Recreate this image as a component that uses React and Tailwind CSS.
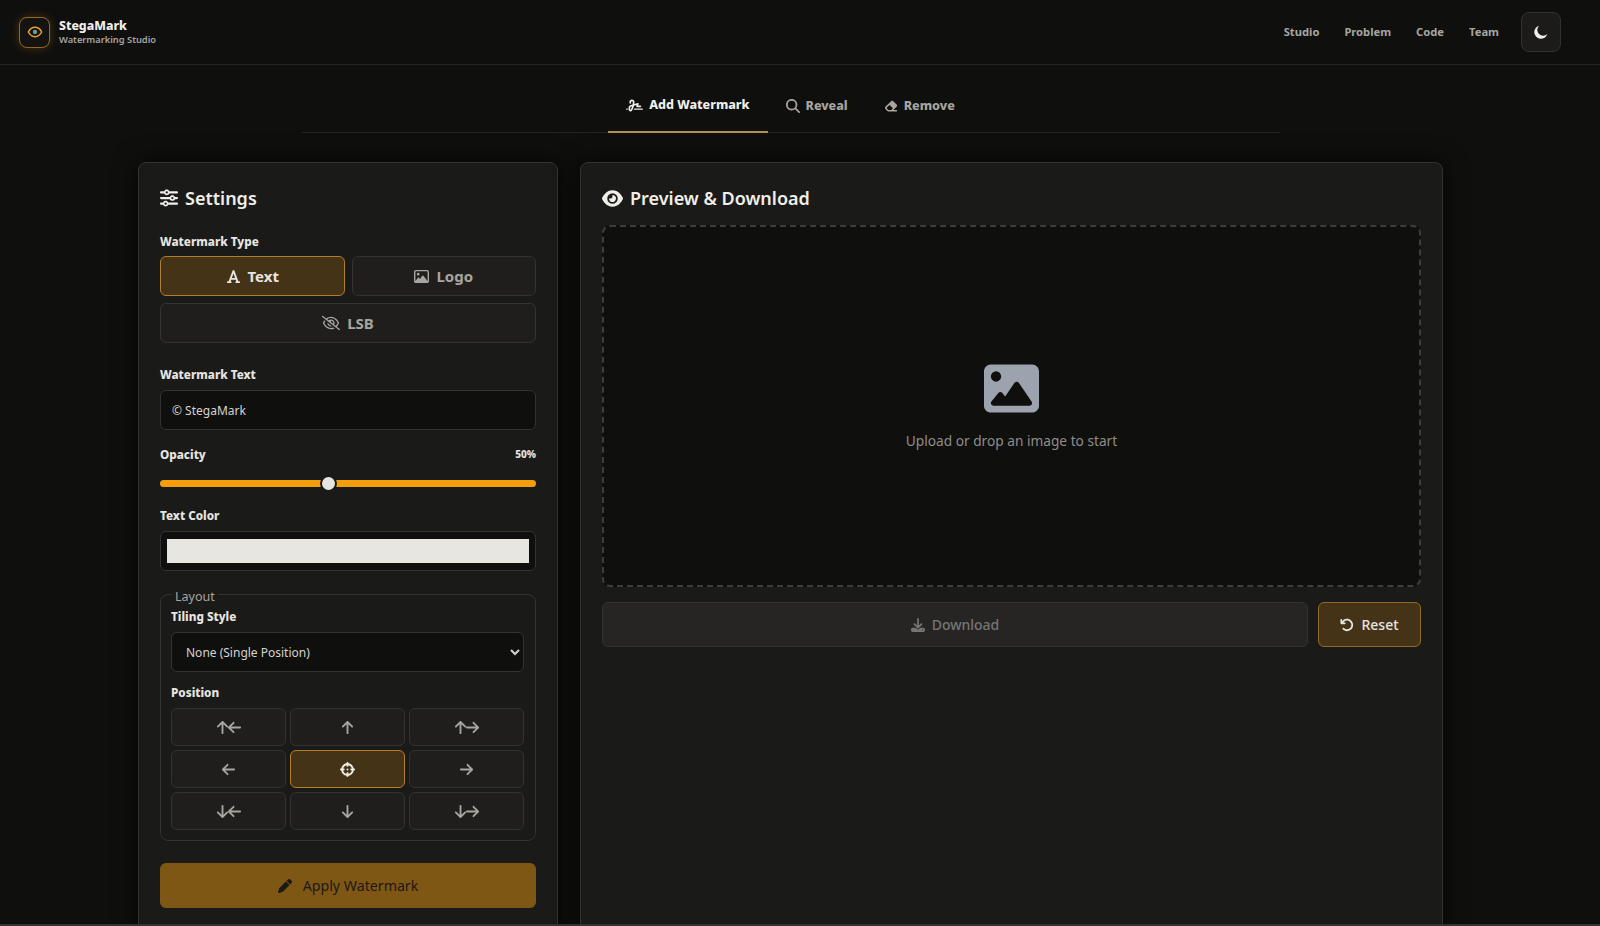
import React from "react";
import {
  FaArrowDown,
  FaArrowLeft,
  FaArrowRight,
  FaArrowRotateLeft,
  FaArrowUp,
  FaCrosshairs,
  FaDownload,
  FaEraser,
  FaEye,
  FaFont,
  FaImage,
  FaMagnifyingGlass,
  FaPen,
  FaRegEyeSlash,
  FaRegImage,
  FaSignature,
  FaSliders,
} from "react-icons/fa6";

const positions = [
  [FaArrowUp, FaArrowLeft],
  [FaArrowUp],
  [FaArrowUp, FaArrowRight],
  [FaArrowLeft],
  [FaCrosshairs],
  [FaArrowRight],
  [FaArrowDown, FaArrowLeft],
  [FaArrowDown],
  [FaArrowDown, FaArrowRight],
];

function Label({ children, className = "" }) {
  return <div className={`text-[11.7px] leading-[16px] font-extrabold text-[#e7e5e0] ${className}`}>{children}</div>;
}

function TypeButton({ icon: Icon, active, iconSize = "text-[15px]", children }) {
  return (
    <button
      className={`h-10 flex items-center justify-center gap-[7px] rounded-md border text-[15px] font-bold ${
        active
          ? "bg-[#453318] border-[#b07f28] text-[#e7e5e0]"
          : "bg-[#1f1e1d] border-[#333331] text-[#a8a5a0]"
      }`}
    >
      <Icon className={iconSize} />
      {children}
    </button>
  );
}

function PositionButton({ icons, active }) {
  return (
    <button
      className={`h-[38px] flex items-center justify-center rounded-md border ${
        active
          ? "bg-[#453318] border-[#b07f28] text-[#f0eee9]"
          : "bg-[#1f1e1d] border-[#333331] text-[#a8a5a0]"
      }`}
    >
      {icons.map((Icon, i) => (
        <Icon key={i} className={`text-[15px] ${i === 1 ? "-ml-[3px]" : ""}`} />
      ))}
    </button>
  );
}

function Logo() {
  return (
    <div className="w-[31px] h-[31px] flex items-center justify-center rounded-lg border border-[#8f6a25] bg-[#141312] shadow-[0_0_10px_rgba(245,158,11,0.25)]">
      <svg width="16" height="16" viewBox="0 0 24 24" fill="none" stroke="#eda529" strokeWidth="2.2">
        <path d="M2 12s3.6-7 10-7 10 7 10 7-3.6 7-10 7-10-7-10-7z" />
        <circle cx="12" cy="12" r="3.2" fill="#5ba7a0" stroke="none" />
      </svg>
    </div>
  );
}

export default function App() {
  return (
    <div className="h-[926px] overflow-hidden bg-[#0f0f0e] border-b-2 border-[#333333] font-['Noto_Sans',sans-serif]">
      <header className="h-[65px] flex items-center justify-between pl-[19px] pr-[39px] border-b border-[#242423]">
        <div className="flex items-center gap-[9px]">
          <Logo />
          <div>
            <div className="text-[12.3px] leading-[14px] font-extrabold text-[#f0eee9]">StegaMark</div>
            <div className="text-[9.3px] leading-[13px] font-semibold text-[#a8a5a0]">Watermarking Studio</div>
          </div>
        </div>
        <nav className="flex items-center gap-[25px] text-[11.2px] font-bold text-[#a8a5a0]">
          <span>Studio</span>
          <span>Problem</span>
          <span>Code</span>
          <span>Team</span>
          <button className="ml-[-3px] w-10 h-10 flex items-center justify-center rounded-lg border border-[#333331] bg-[#1c1b1a] text-[#f0eee9]">
            <svg width="16" height="16" viewBox="0 0 24 24" fill="currentColor">
              <path d="M9 2.5A10 10 0 1 0 21.5 15 8.6 8.6 0 0 1 9 2.5z" />
            </svg>
          </button>
        </nav>
      </header>

      <div className="w-[1581px]">
        <div className="w-[978px] mx-auto mt-[16px] flex justify-center border-b border-[#242423] h-[52px]">
          <div className="h-[52px] flex items-center gap-[6px] px-[18px] pb-[2px] border-b-2 border-[#b58f52] text-[12.5px] font-extrabold text-[#f0eee9]">
            <FaSignature className="text-[17px]" />
            Add Watermark
          </div>
          <div className="h-[52px] flex items-center gap-[6px] px-[18px] pb-[2px] text-[12.5px] font-extrabold text-[#a8a5a0]">
            <FaMagnifyingGlass className="text-[14px]" />
            Reveal
          </div>
          <div className="h-[52px] flex items-center gap-[6px] px-[18px] pb-[2px] text-[12.6px] font-extrabold text-[#a8a5a0]">
            <FaEraser className="text-[14px]" />
            Remove
          </div>
        </div>

        <main className="w-[1305px] mx-auto mt-[29px] flex gap-[22px] items-start">
          <section className="w-[420px] shrink-0 h-[800px] rounded-lg border border-[#333331] bg-[#1a1a19] shadow-[0_0_24px_rgba(0,0,0,0.7)] px-[21px] pt-[21px]">
            <h2 className="flex items-center gap-[7px] h-7 text-[18px] font-semibold text-[#f0eee9]">
              <FaSliders className="text-[18px]" />
              Settings
            </h2>

            <Label className="mt-[21px]">Watermark Type</Label>
            <div className="mt-[7px] grid grid-cols-2 gap-[7px]">
              <TypeButton icon={FaFont} active>Text</TypeButton>
              <TypeButton icon={FaRegImage}>Logo</TypeButton>
              <div className="col-span-2 grid">
                <TypeButton icon={FaRegEyeSlash} iconSize="text-[18px]">LSB</TypeButton>
              </div>
            </div>

            <Label className="mt-[23px]">Watermark Text</Label>
            <input
              readOnly
              value="© StegaMark"
              className="mt-[8px] block w-full h-10 px-[11px] rounded-md border border-[#333331] bg-[#0f0f0e] text-[12px] text-[#d6d3ce] outline-none"
            />

            <div className="mt-[16px] flex items-center justify-between">
              <Label>Opacity</Label>
              <span className="text-[10px] font-extrabold text-[#e7e5e0]">50%</span>
            </div>
            <div className="mt-[13px] relative h-[16px] flex items-center">
              <div className="w-full h-[7px] rounded-full bg-[#f59e0b]" />
              <div className="absolute left-[160px] top-0 w-[17px] h-[17px] rounded-full bg-[#e7e5e0] border-2 border-[#1a1a19]" />
            </div>

            <Label className="mt-[16px]">Text Color</Label>
            <div className="mt-[8px] h-10 rounded-md border border-[#333331] bg-[#0f0f0e] flex items-center px-[6px]">
              <div className="w-full h-[24px] bg-[#e8e6e1]" />
            </div>

            <fieldset className="mt-[12px] h-[258px] rounded-lg border border-[#333331] pl-[10px] pr-[11px] pb-2">
              <legend className="ml-[1px] px-[3px] pt-[6px] text-[12.5px] leading-[16px] text-[#a8a5a0]">Layout</legend>
              <Label className="mt-[3px]">Tiling Style</Label>
              <select className="mt-[8px] block w-full h-10 pl-[10px] pr-1 rounded-md border border-[#333331] bg-[#0f0f0e] text-[12px] text-[#d6d3ce] outline-none">
                <option>None (Single Position)</option>
              </select>
              <Label className="mt-[12px]">Position</Label>
              <div className="mt-[8px] grid grid-cols-3 gap-1">
                {positions.map((icons, i) => (
                  <PositionButton key={i} icons={icons} active={i === 4} />
                ))}
              </div>
            </fieldset>

            <button className="mt-[22px] w-full h-[45px] flex items-center justify-center gap-[11px] rounded-md bg-[#7f5714] text-[14.2px] text-[#1c1917]">
              <FaPen className="text-[14px]" />
              Apply Watermark
            </button>
          </section>

          <section className="flex-1 h-[800px] rounded-lg border border-[#333331] bg-[#1a1a19] shadow-[0_0_24px_rgba(0,0,0,0.7)] px-[21px] pt-[21px]">
            <h2 className="flex items-center gap-[7px] h-7 text-[18px] font-semibold text-[#f0eee9]">
              <FaEye className="text-[21px]" />
              Preview &amp; Download
            </h2>
            <div className="mt-[13px] h-[362px] rounded-lg border-2 border-dashed border-[#3d3d3b] bg-[#0f0f0e] flex flex-col items-center justify-center">
              <FaImage className="text-[#9ca3af] text-[55px]" />
              <p className="mt-[14px] text-[13.7px] leading-[21px] text-[#8f8d89]">Upload or drop an image to start</p>
            </div>
            <div className="mt-[15px] flex gap-[10px]">
              <button className="flex-1 h-[45px] flex items-center justify-center gap-[7px] rounded-md border border-[#333331] bg-[#262524] text-[14px] font-medium text-[#777673]">
                <FaDownload className="text-[14px]" />
                Download
              </button>
              <button className="w-[103px] h-[45px] flex items-center justify-center gap-[7px] rounded-md border border-[#8f6a25] bg-[#453318] text-[14px] font-medium text-[#e7e5e0]">
                <FaArrowRotateLeft className="text-[14px]" />
                Reset
              </button>
            </div>
          </section>
        </main>
      </div>
    </div>
  );
}
